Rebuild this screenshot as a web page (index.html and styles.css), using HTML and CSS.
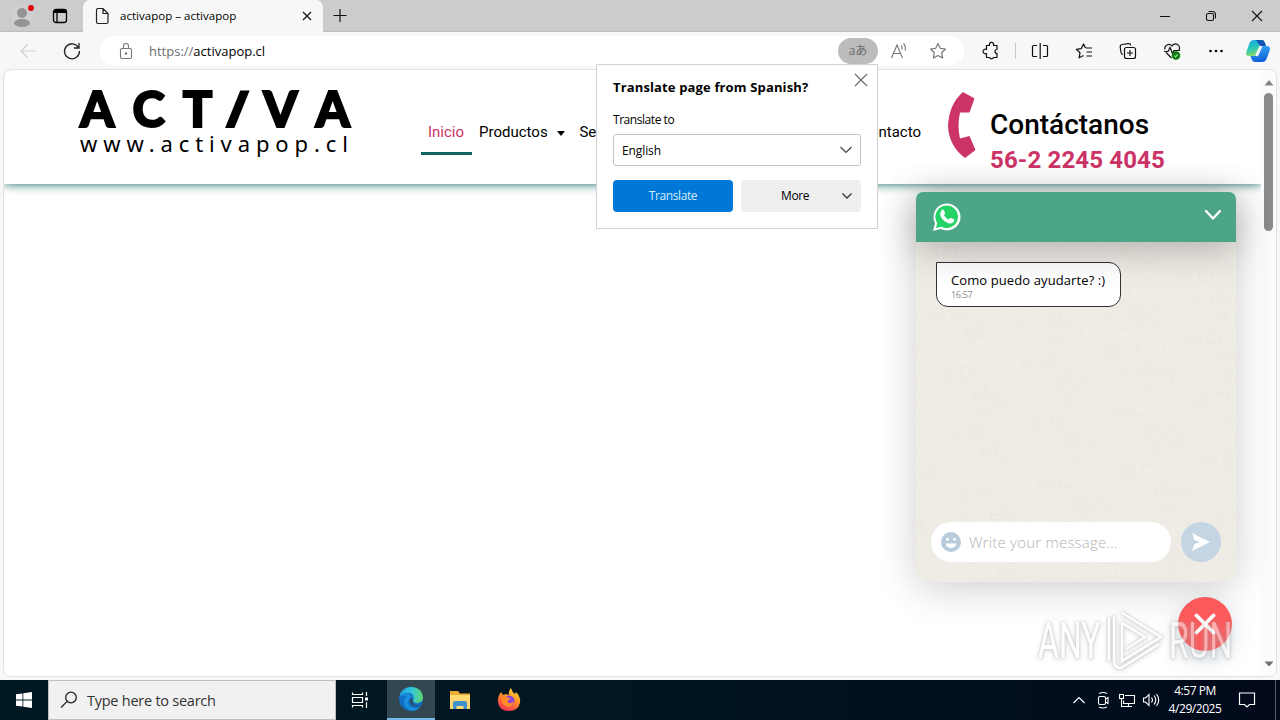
FILE: index.html
```
<!DOCTYPE html>
<html lang="es">
<head>
    <meta charset="utf-8">
    <title>activapop – activapop</title>
    <link rel="stylesheet" href="styles.css">
</head>
<body>
    <div class="tabs">
        <svg class="profile" width="32" height="32" viewBox="0 0 32 32"><circle cx="16" cy="16" r="11" fill="#d0d0d0"/><circle cx="16" cy="13" r="5" fill="#949494"/><ellipse cx="16" cy="23" rx="8" ry="4" fill="#949494"/><circle cx="25" cy="8" r="3" fill="#e3000b"/></svg>
        <svg class="workspaces" width="16" height="16" viewBox="0 0 16 16" fill="none" stroke="#000" stroke-width="1.3"><rect x="1.5" y="1.5" width="13" height="13" rx="2.5"/><path d="M2 3.5h12" stroke-width="3"/><path d="M5 4v10"/></svg>
        <div class="tab">
            <svg width="14" height="18" viewBox="0 0 14 18" fill="none" stroke="#222" stroke-width="1.2"><path d="M3 1.5h5l5 5V15a1.5 1.5 0 0 1-1.5 1.5H3A1.5 1.5 0 0 1 1.5 15V3A1.5 1.5 0 0 1 3 1.5zM8 1.5V6.5h5"/></svg>
            <span class="tab-title">activapop – activapop</span>
            <svg width="10" height="10" viewBox="0 0 10 10" stroke="#111" stroke-width="1.2"><path d="M1 1l8 8M9 1l-8 8"/></svg>
        </div>
        <svg class="new-tab" width="16" height="16" viewBox="0 0 16 16" stroke="#111" stroke-width="1.2"><path d="M1.5 7.5h13M8 1v13"/></svg>
        <div class="window-buttons">
            <svg width="46" height="32" viewBox="0 0 46 32" fill="none" stroke="#111"><path d="M18 16.5h10"/></svg>
            <svg width="46" height="32" viewBox="0 0 46 32" fill="none" stroke="#111" stroke-width="1.1"><rect x="18.5" y="13.5" width="7" height="7" rx="1.5"/><path d="M20.5 11.5h4a3 3 0 0 1 3 3v4"/></svg>
            <svg width="46" height="32" viewBox="0 0 46 32" fill="none" stroke="#111" stroke-width="1.1"><path d="M18 11l10 10M28 11L18 21"/></svg>
        </div>
    </div>

    <div class="toolbar">
        <svg class="back" width="20" height="20" viewBox="0 0 20 20" fill="none" stroke="#d0d0d0" stroke-width="1.2"><path d="M18 10H3M9.5 3.5L3 10l6.5 6.5"/></svg>
        <svg class="reload" width="20" height="20" viewBox="0 0 20 20" fill="none" stroke="#222" stroke-width="1.3"><path d="M16.5 6.5A7.5 7.5 0 1 0 17.5 10M17 2v5h-5"/></svg>
        <div class="address">
            <svg class="lock" width="14" height="18" viewBox="0 0 14 18" fill="none" stroke="#777" stroke-width="1.1"><rect x="1.5" y="6.5" width="11" height="10" rx="1.5"/><path d="M4.500 6.500V4a2.500 2.500 0 0 1 5 0v2.500"/><circle cx="7" cy="11.500" r=".7" fill="#777"/></svg>
            <span class="url"><span class="scheme">https://</span>activapop.cl</span>
            <span class="translate-badge">aあ</span>
            <svg class="read" width="20" height="18" viewBox="0 0 20 18" fill="none" stroke="#777" stroke-width="1.1"><path d="M2.500 16L8 3l5.500 13M4.500 11.500h7M12 3.500q1.500 1.500 1 4M14.500 1.500q2.800 3 1.500 7"/></svg>
            <svg width="18" height="18" viewBox="0 0 18 18" fill="none" stroke="#777" stroke-width="1.2" stroke-linejoin="round"><path d="M9 1.500l2.300 4.800 5.200.7-3.800 3.700.9 5.300L9 13.500 4.400 16l.9-5.300L1.500 7l5.200-.7z"/></svg>
        </div>
        <svg class="tool ext" viewBox="0 0 44 36" fill="none" stroke="#111" stroke-width="1.2" stroke-linejoin="round"><path d="M17.500 12.500h3a2.200 2.200 0 1 1 4 0h3.500v4a2 2 0 1 0 0 4v4h-3.500a2.200 2.200 0 0 1-4 0h-3v-4a2.300 2.300 0 1 1 0-4z"/></svg>
        <span class="divider"></span>
        <svg class="tool" viewBox="0 0 44 36" fill="none" stroke="#111" stroke-width="1.2"><path d="M19 12.500h-3.500a1 1 0 0 0-1 1v9a1 1 0 0 0 1 1H19M25 12.500h3.500a1 1 0 0 1 1 1v9a1 1 0 0 1-1 1H25M22.200 10v16"/></svg>
        <svg class="tool" viewBox="0 0 44 36" fill="none" stroke="#111" stroke-width="1.2" stroke-linejoin="round"><path d="M24 15h6M24.500 19H30M24.500 23H30M23.500 15l-2-4-2.200 4.600-5 .7 3.700 3.500-.9 5 4.400-2.300"/></svg>
        <svg class="tool" viewBox="0 0 44 36" fill="none" stroke="#111" stroke-width="1.2"><path d="M17 21.500a2.500 2.500 0 0 1-2-2l-.8-5.500a2.300 2.300 0 0 1 2-2.500l6-.9a2.300 2.300 0 0 1 2.600 1.900"/><rect x="18.500" y="14.500" width="11" height="11" rx="2"/><path d="M24 17v6M21 20h6"/></svg>
        <svg class="tool" viewBox="0 0 44 36" fill="none" stroke="#111" stroke-width="1.2"><path d="M21.500 25l-5.500-5.500M14 18.500h4l2-4 2.500 6 1.500-3h6M15 16.500a4 4 0 0 1 7-3.500 4 4 0 0 1 7 4"/><circle cx="26" cy="22.500" r="3.700" fill="#107c10" stroke="#107c10"/><path d="M24.300 22.600l1.300 1.200 2.200-2.400" stroke="#9bdc9b"/></svg>
        <svg class="tool" viewBox="0 0 44 36"><circle cx="16.500" cy="18" r="1.300"/><circle cx="22" cy="18" r="1.300"/><circle cx="27.500" cy="18" r="1.300"/></svg>
        <svg class="copilot" width="28" height="28" viewBox="0 0 28 28">
            <defs><linearGradient id="cop1" x2=".3" y2="1"><stop stop-color="#19a5e8"/><stop offset=".6" stop-color="#2cc9b0"/><stop offset="1" stop-color="#8bdc68"/></linearGradient><linearGradient id="cop2" x2=".2" y2="1"><stop stop-color="#35aaf2"/><stop offset="1" stop-color="#1263dc"/></linearGradient></defs>
            <path d="M10 3h8q2 0 3 3l1 3h-4q-2 0-3 3l-2 5q-1 2-3 2H5q-4 0-2.500-4.500L5.500 6Q7 3 10 3z" fill="url(#cop1)"/>
            <path d="M12 3h6q2 0 3 3l1 3h-6z" fill="#1553b7"/><path d="M20 9h3q4 0 2.500 5l-3 8q-1 3-4 3h-8q-2 0-3-3l-1-3h4q2 0 3-3l2-5q1-2 4.500-2z" fill="url(#cop2)"/><path d="M17 9l-4.500 10" stroke="#f7f7f7" stroke-width="3"/>
        </svg>
    </div>

    <div class="viewport">
        <div class="site">
            <header class="site-header">
                <div class="logo">
                    <div class="logo-name"><span>A</span><span>C</span><span>T</span><span class="slant">I</span><span>V</span><span>A</span></div>
                    <div class="logo-url">www.activapop.cl</div>
                </div>
                <nav class="menu">
                    <a class="active">Inicio</a>
                    <a>Productos <i class="caret"></i></a>
                    <a>Servicios</a>
                    <a class="last">Contacto</a>
                </nav>
                <div class="contact">
                    <svg width="28" height="68" viewBox="0 0 28 68"><path d="M15 0l11.500 6.500-5 14H12q-3 13 0 26l9.500-2.500 6 14L17 66Q1 54 0 34 1 12 15 0z" fill="#cc3366"/></svg>
                    <div>
                        <div class="contact-title">Contáctanos</div>
                        <div class="contact-phone">56-2 2245 4045</div>
                    </div>
                </div>
            </header>
        </div>
        <div class="scrollbar">
            <svg width="10" height="6" viewBox="0 0 10 6"><path d="M5 0l4.500 5.500h-9z" fill="#858585"/></svg>
            <div class="thumb"></div>
            <svg class="down" width="10" height="6" viewBox="0 0 10 6"><path d="M.5.5h9L5 5.500z" fill="#707070"/></svg>
        </div>
    </div>

    <div class="chat">
        <div class="chat-header">
            <svg width="30" height="30" viewBox="0 0 30 30"><path d="M1 29l2-7.800A13.500 13.500 0 1 1 8.800 27z" fill="#fff"/><path d="M4 26l1.300-4.900A11.300 11.300 0 1 1 9.400 24.800z" fill="#25d366"/><path d="M9.500 8.200q1-1 2.200-.3l1.600 3.300-1.300 1.900q1.400 3 4.700 4.500l1.900-1.900 3.600 1.800q.3 3.300-3.300 3.900-4.300.5-8.300-4.100-4-4.600-1.100-9.100z" fill="#fff"/></svg>
            <svg width="18" height="12" viewBox="0 0 18 12" fill="none" stroke="#fff" stroke-width="2.300" stroke-linecap="round" stroke-linejoin="round"><path d="M2 2l7 7.500L16 2"/></svg>
        </div>
        <div class="chat-body">
            <svg class="doodles" width="320" height="340" fill="none" stroke="#ebe6de" stroke-width="1">
                <defs><pattern id="doodle" width="83" height="61" patternUnits="userSpaceOnUse" patternTransform="rotate(-8)">
                    <circle cx="12" cy="14" r="7"/><circle cx="12" cy="14" r="3"/><path d="M28 8l12 3-3 10-12-3zM50 10q8-8 14 2t-6 12M8 34l8-6 8 8-9 7zM36 32h14v10H36zM36 34l7 4 7-4M62 36l4 6 7 1-5 5 1 7-7-3-6 3 1-7-5-5 7-1zM10 52q6-6 12 0t12 0M38 56l6-8 6 10H38zM70 10l6 10M46 24q5 4 10 2M24 24l8 4"/>
                </pattern></defs>
                <rect width="320" height="340" fill="url(#doodle)" stroke="none"/>
            </svg>
            <div class="bubble">
                <div class="bubble-text">Como puedo ayudarte? :)</div>
                <div class="bubble-time">16:57</div>
            </div>
            <div class="compose">
                <div class="message-field">
                    <svg width="20" height="20" viewBox="0 0 20 20"><circle cx="10" cy="10" r="10" fill="#b8cbdc"/><circle cx="6.500" cy="7.200" r="1.500" fill="#fff"/><circle cx="13.500" cy="7.200" r="1.500" fill="#fff"/><path d="M4.500 11.500h11q-1.500 4.500-5.500 4.500t-5.500-4.500z" fill="#fff"/></svg>
                    <span>Write your message...</span>
                </div>
                <div class="send"><svg width="20" height="18" viewBox="0 0 20 18"><path d="M1 0l18 9L1 18l2.500-7L9 9 3.500 7z" fill="#fff"/></svg></div>
            </div>
        </div>
    </div>
    <div class="chat-close"><svg width="22" height="22" viewBox="0 0 22 22" stroke="#fff" stroke-width="3.800" stroke-linecap="round"><path d="M2.500 2.500l17 17M19.500 2.500l-17 17"/></svg></div>

    <div class="watermark">
        <span class="any">ANY</span>
        <svg width="58" height="64" viewBox="0 0 58 64" fill="none" stroke="#fff" stroke-width="2.500"><path d="M16 4l39 24-39 24V14l23 14-19 12M3 8v44M8 7v44q0 8 7 8l38-24"/></svg>
        <span class="run">RUN</span>
    </div>

    <div class="translate">
        <div class="translate-head">
            <span>Translate page from Spanish?</span>
            <svg width="14" height="14" viewBox="0 0 14 14" stroke="#666" stroke-width="1.100"><path d="M1 1l12 12M13 1L1 13"/></svg>
        </div>
        <div class="translate-label">Translate to</div>
        <div class="select"><span>English</span><svg width="12" height="8" viewBox="0 0 12 8" fill="none" stroke="#444" stroke-width="1.200"><path d="M.5 1L6 6.500 11.500 1"/></svg></div>
        <div class="translate-buttons">
            <div class="btn primary">Translate</div>
            <div class="btn more"><span>More</span><svg width="12" height="8" viewBox="0 0 12 8" fill="none" stroke="#333" stroke-width="1.300"><path d="M1.500 1.500L6 6l4.500-4.500"/></svg></div>
        </div>
    </div>

    <div class="taskbar">
        <div class="start"><svg width="16" height="16" viewBox="0 0 16 16" fill="#fff"><path d="M0 2.300L6.500 1.400v6.200H0zM7.300 1.300L16 0v7.600H7.300zM0 8.400h6.500v6.200L0 13.700zM7.300 8.400H16V16l-8.700-1.300z"/></svg></div>
        <div class="search">
            <svg width="18" height="18" viewBox="0 0 18 18" fill="none" stroke="#222" stroke-width="1.300"><circle cx="11" cy="6.500" r="5.300"/><path d="M7.200 10.400L1 16.500"/></svg>
            <span>Type here to search</span>
        </div>
        <div class="app"><svg width="18" height="18" viewBox="0 0 18 18" fill="none" stroke="#fff" stroke-width="1.200"><path d="M1.500 1.500v2h10v-2M1.500 16.500v-2h10v2M1.500 6.500h10v5h-10zM15.500 1v4M15.500 11v6"/><path d="M15.500 6.500v3" stroke-width="3"/></svg></div>
        <div class="app open">
            <svg width="26" height="26" viewBox="0 0 26 26">
                <defs><linearGradient id="edge1"><stop stop-color="#1b9de2"/><stop offset=".5" stop-color="#31c5df"/><stop offset="1" stop-color="#62d66c"/></linearGradient></defs>
                <circle cx="13" cy="13" r="12" fill="#126cc0"/><path d="M1.500 11C3-3 25-2 25 12c0 5-8 7-10 3 2-5-1-8-5-8-5 0-8 3-8.500 4z" fill="url(#edge1)"/><path d="M2 12c3-6 11-5 12-1-4 1-5 6-2 9s8 3 11 0c-5 8-16 5-17-3-.5-4 1-6 4-7-3-1-6-.5-8 2z" fill="#1990dc"/><path d="M13 12c-2 4 0 7 4 8 3 .7 5 0 7-1-2 1.500-11 1-9-4z" fill="#32474f"/>
            </svg>
        </div>
        <div class="app"><svg width="22" height="20" viewBox="0 0 22 20"><path d="M1 1h8l2 2.500h10V19H1z" fill="#ecab35"/><path d="M1 5h20v14H1z" fill="#ffd86e"/><path d="M4 19v-6q0-2 2-2h10q2 0 2 2v6h-3.500v-3h-7v3z" fill="#3e91cd"/></svg></div>
        <div class="app"><svg width="24" height="24" viewBox="0 0 24 24">
            <defs><linearGradient id="fox" x1=".8" x2=".3" y2="1"><stop stop-color="#ffe23d"/><stop offset=".45" stop-color="#ff9326"/><stop offset="1" stop-color="#f52e53"/></linearGradient></defs>
            <path d="M4 4l2 3 3-1 3 1q-1-4 2-7 1 4 4 6l1-2q5 5 4 11-2 8-11 8Q2 23 1 14 0 9 4 4z" fill="url(#fox)"/><circle cx="12" cy="13" r="5.500" fill="#8a43dd"/><path d="M4 9q5-2 8 1l2 1q-4 1-3 3 2 3 6-1-1 6-6 6-7-2-7-10z" fill="#ff8a28"/></svg></div>
        <div class="tray">
            <svg width="24" height="24" viewBox="0 0 24 24" fill="none" stroke="#fff" stroke-width="1.200"><path d="M6.500 15L12 9.500l5.500 5.500"/></svg>
            <svg width="24" height="24" viewBox="0 0 24 24" fill="none" stroke="#fff" stroke-width="1.100"><rect x="7.500" y="8.500" width="7" height="8" rx="1.500"/><path d="M14.500 11l2.500-1.500v6L14.500 14M8 5.500q4-2 8 0M8 19q4 2 8 0"/></svg>
            <svg width="24" height="24" viewBox="0 0 24 24" fill="none" stroke="#fff" stroke-width="1.100"><path d="M10 7.500h9.500v8H8.500v-3M13.500 15.500v3M9 18.500h8M4.500 6.500h4v4h-4zM6.500 10.500v8h3"/></svg>
            <svg width="24" height="24" viewBox="0 0 24 24" fill="none" stroke="#fff" stroke-width="1.100"><path d="M4.500 10v4h2l3.500 3.500v-11L6.500 10zM12.500 9.500q2 2.500 0 5M15 7.500q3.500 4.500 0 9M17.500 6q4.500 6 0 12"/></svg>
            <div class="clock">4:57 PM<br>4/29/2025</div>
            <svg class="notice" width="18" height="18" viewBox="0 0 18 18" fill="none" stroke="#fff" stroke-width="1.200"><path d="M1.500 2h15v11.500h-5L9 16l-2.500-2.500h-5z"/></svg>
        </div>
    </div>
</body>
</html>
```
FILE: styles.css
```
* {
    box-sizing: border-box;
}
body {
    margin: 0;
    width: 1280px;
    height: 720px;
    position: relative;
    overflow: hidden;
    display: flex;
    flex-direction: column;
    background: #f7f7f7;
    color: #000;
    font-family: "Open Sans", "Noto Sans", sans-serif;
    font-size: 12px;
}
svg {
    display: block;
    flex-shrink: 0;
}
.tabs {
    height: 32px;
    display: flex;
    align-items: center;
    background: #cccccc;
    border-bottom: 1px solid #bdbdbd;
}
.profile {
    margin-left: 6px;
}
.workspaces {
    margin: 0 15px 0 14px;
}
.tab {
    width: 240px;
    height: 32px;
    display: flex;
    align-items: center;
    padding: 0 11px 0 12px;
    background: #f7f7f7;
    border-radius: 7px 7px 0 0;
}
.tab-title {
    flex: 1;
    margin-left: 11px;
    font-size: 11.5px;
    letter-spacing: 0.02px;
}
.new-tab {
    margin-left: 9px;
}
.window-buttons {
    display: flex;
    margin-left: auto;
}
.toolbar {
    height: 37px;
    display: flex;
    align-items: center;
}
.back {
    margin-left: 18px;
}
.reload {
    margin-left: 24px;
}
.address {
    width: 864px;
    height: 30px;
    margin-left: 18px;
    display: flex;
    align-items: center;
    padding: 0 17px 0 19px;
    background: #fff;
    border-radius: 15px;
}
.url {
    flex: 1;
    margin-left: 16px;
    font-size: 13px;
}
.scheme {
    color: #6e6e6e;
}
.translate-badge {
    width: 40px;
    height: 26px;
    border-radius: 13px;
    background: #bcbcbc;
    color: #6b6b6b;
    text-align: center;
    line-height: 25px;
    font-family: "Open Sans", "Noto Sans CJK JP", sans-serif;
    font-size: 12px;
}
.read {
    margin: 0 20px 0 11px;
}
.tool {
    width: 44px;
    height: 36px;
}
.ext {
    margin-left: 5px;
}
.divider {
    width: 1px;
    height: 16px;
    margin: 0 2px 0 2px;
    background: #c8c8c8;
}
.copilot {
    margin-left: 6px;
}
.viewport {
    width: 1274px;
    height: 608px;
    margin-left: 3px;
    display: flex;
    background: #fff;
    border: 1px solid #e2e2e2;
    border-radius: 8px;
    overflow: hidden;
}
.site {
    width: 1257px;
}
.site-header {
    height: 114px;
    display: flex;
    box-shadow: 0 0 10px #11665f;
    background: #fff;
}
.logo {
    width: 270px;
    margin-left: 76px;
    padding-top: 20px;
}
.logo-name {
    display: flex;
    justify-content: space-between;
    height: 38px;
    font-family: Lato, sans-serif;
    font-weight: 900;
    font-size: 49px;
    line-height: 36px;
    -webkit-text-stroke: 2px #000;
}
.slant {
    transform: skewX(-22deg);
}
.logo-url {
    font-family: "Noto Sans", sans-serif;
    font-size: 22px;
    line-height: 30px;
    letter-spacing: 5.9px;
    white-space: nowrap;
}
.menu {
    display: flex;
    width: 507px;
    margin-left: 71px;
    padding-top: 40px;
    font-family: Roboto, sans-serif;
    font-size: 15px;
}
.menu a {
    height: 45px;
    padding: 0 7px;
    line-height: 44px;
    white-space: nowrap;
}
.menu .active {
    color: #cc3366;
    padding-right: 8px;
    border-bottom: 3px solid #11665f;
}
.menu .last {
    margin-left: auto;
}
.caret {
    display: inline-block;
    margin-left: 6px;
    border: 4.5px solid transparent;
    border-top: 5px solid #000;
    border-bottom: 0;
    vertical-align: 1px;
}
.contact {
    display: flex;
    margin-left: 20px;
    padding-top: 22px;
    gap: 14px;
    font-family: Roboto, sans-serif;
    white-space: nowrap;
}
.contact-title {
    padding-top: 15px;
    font-size: 28px;
    font-weight: 500;
    line-height: 36px;
}
.contact-phone {
    color: #cc3366;
    font-size: 24px;
    font-weight: 700;
    line-height: 34px;
    letter-spacing: 0.15px;
}
.scrollbar {
    width: 15px;
    display: flex;
    flex-direction: column;
    align-items: center;
    padding: 10px 0 9px;
    background: #fcfcfc;
}
.thumb {
    width: 9px;
    height: 138px;
    margin-top: 7px;
    border-radius: 5px;
    background: #8b8b8b;
}
.scrollbar .down {
    margin-top: auto;
}
.chat {
    position: absolute;
    left: 916px;
    top: 192px;
    width: 320px;
    height: 390px;
    border-radius: 7px 7px 16px 16px;
    box-shadow: 0 6px 40px rgba(0, 0, 0, 0.2);
    isolation: isolate;
}
.chat-header {
    position: relative;
    z-index: 1;
    height: 50px;
    display: flex;
    align-items: center;
    justify-content: space-between;
    padding: 0 14px 0 16px;
    background: #4ca586;
    border-radius: 7px 7px 0 0;
    box-shadow: 0 8px 36px rgba(0, 0, 0, 0.25);
}
.chat-header svg:last-child {
    margin-bottom: 4px;
}
.chat-body {
    position: relative;
    height: 340px;
    display: flex;
    flex-direction: column;
    justify-content: space-between;
    align-items: flex-start;
    padding: 20px 15px;
    background: #efece6;
    border-radius: 0 0 16px 16px;
    overflow: hidden;
}
.doodles {
    position: absolute;
    left: 0;
    top: 0;
}
.bubble {
    position: relative;
    width: 185px;
    height: 45px;
    margin-left: 5px;
    padding: 8px 14px;
    background: #fff;
    border: 1px solid #333;
    border-radius: 0 12px 12px 12px;
    white-space: nowrap;
}
.bubble-text {
    font-size: 13px;
    line-height: 18px;
    letter-spacing: 0.1px;
}
.bubble-time {
    color: #8a8a8a;
    font-size: 9px;
    line-height: 12px;
    letter-spacing: -0.3px;
}
.compose {
    position: relative;
    display: flex;
    gap: 10px;
}
.message-field {
    width: 240px;
    height: 40px;
    display: flex;
    align-items: center;
    gap: 8px;
    padding-left: 10px;
    border-radius: 20px;
    background: #fff;
    color: #b4b4b4;
    font-size: 15px;
    font-weight: 300;
    letter-spacing: 0.22px;
}
.send {
    width: 40px;
    height: 40px;
    display: flex;
    align-items: center;
    justify-content: center;
    border-radius: 50%;
    background: #c4d5e4;
}
.chat-close {
    position: absolute;
    left: 1178px;
    top: 597px;
    width: 54px;
    height: 54px;
    display: flex;
    align-items: center;
    justify-content: center;
    border-radius: 50%;
    background: #fb5a5c;
    box-shadow: 0 8px 22px rgba(60, 90, 120, 0.25);
}
.watermark {
    position: absolute;
    left: 1038px;
    top: 608px;
    width: 194px;
    height: 66px;
    display: flex;
    align-items: center;
    justify-content: space-between;
    color: #fff;
    opacity: 0.5;
    font-family: Roboto, sans-serif;
    font-size: 50px;
    filter: drop-shadow(0 0 1px #999) drop-shadow(0 1px 2px #aaa);
}
.watermark span {
    width: 63px;
    white-space: nowrap;
    transform: scaleX(0.64);
    transform-origin: left center;
}
.translate {
    position: absolute;
    left: 596px;
    top: 64px;
    width: 282px;
    height: 165px;
    padding: 8px 16px 16px;
    background: #fff;
    border: 1px solid #d2d2d2;
}
.translate-head {
    display: flex;
    justify-content: space-between;
    height: 31px;
    margin-right: -7px;
    font-size: 13px;
    font-weight: 700;
    line-height: 29px;
    letter-spacing: 0.14px;
    white-space: nowrap;
}
.translate-label {
    height: 30px;
    line-height: 32px;
    letter-spacing: -0.45px;
}
.select {
    height: 32px;
    display: flex;
    align-items: center;
    justify-content: space-between;
    padding: 0 8px;
    border: 1px solid #c4c4c4;
    border-radius: 3px;
    letter-spacing: -0.1px;
}
.translate-buttons {
    display: flex;
    gap: 8px;
    margin-top: 14px;
}
.btn {
    width: 120px;
    height: 32px;
    border-radius: 4px;
    line-height: 32px;
    letter-spacing: -0.4px;
    text-align: center;
}
.primary {
    background: #0078d7;
    color: #d9ecfc;
}
.more {
    display: flex;
    align-items: center;
    justify-content: space-between;
    padding: 0 8px 0 40px;
    background: #eeeeee;
}
.taskbar {
    height: 40px;
    margin-top: 3px;
    display: flex;
    background: linear-gradient(90deg, #001821, #011622 45%, #020a1b);
}
.start {
    width: 48px;
    display: flex;
    align-items: center;
    justify-content: center;
}
.search {
    width: 288px;
    display: flex;
    align-items: center;
    gap: 9px;
    padding-left: 11px;
    background: #f1f1f1;
    border: 1px solid #bfbfbf;
    color: #333;
    font-size: 14.5px;
    letter-spacing: -0.25px;
}
.app {
    width: 48px;
    display: flex;
    align-items: center;
    justify-content: center;
    margin-right: 1px;
}
.app.open {
    margin-left: 2px;
    background: #32474f;
    border-bottom: 2px solid #76b9ed;
}
.tray {
    display: flex;
    align-items: center;
    margin-left: auto;
    margin-right: 4px;
    padding-right: 19px;
    border-right: 1px solid #566070;
    color: #fff;
}
.clock {
    width: 64px;
    text-align: center;
    line-height: 18px;
    letter-spacing: -0.45px;
}
.notice {
    margin-left: 11px;
}
```
